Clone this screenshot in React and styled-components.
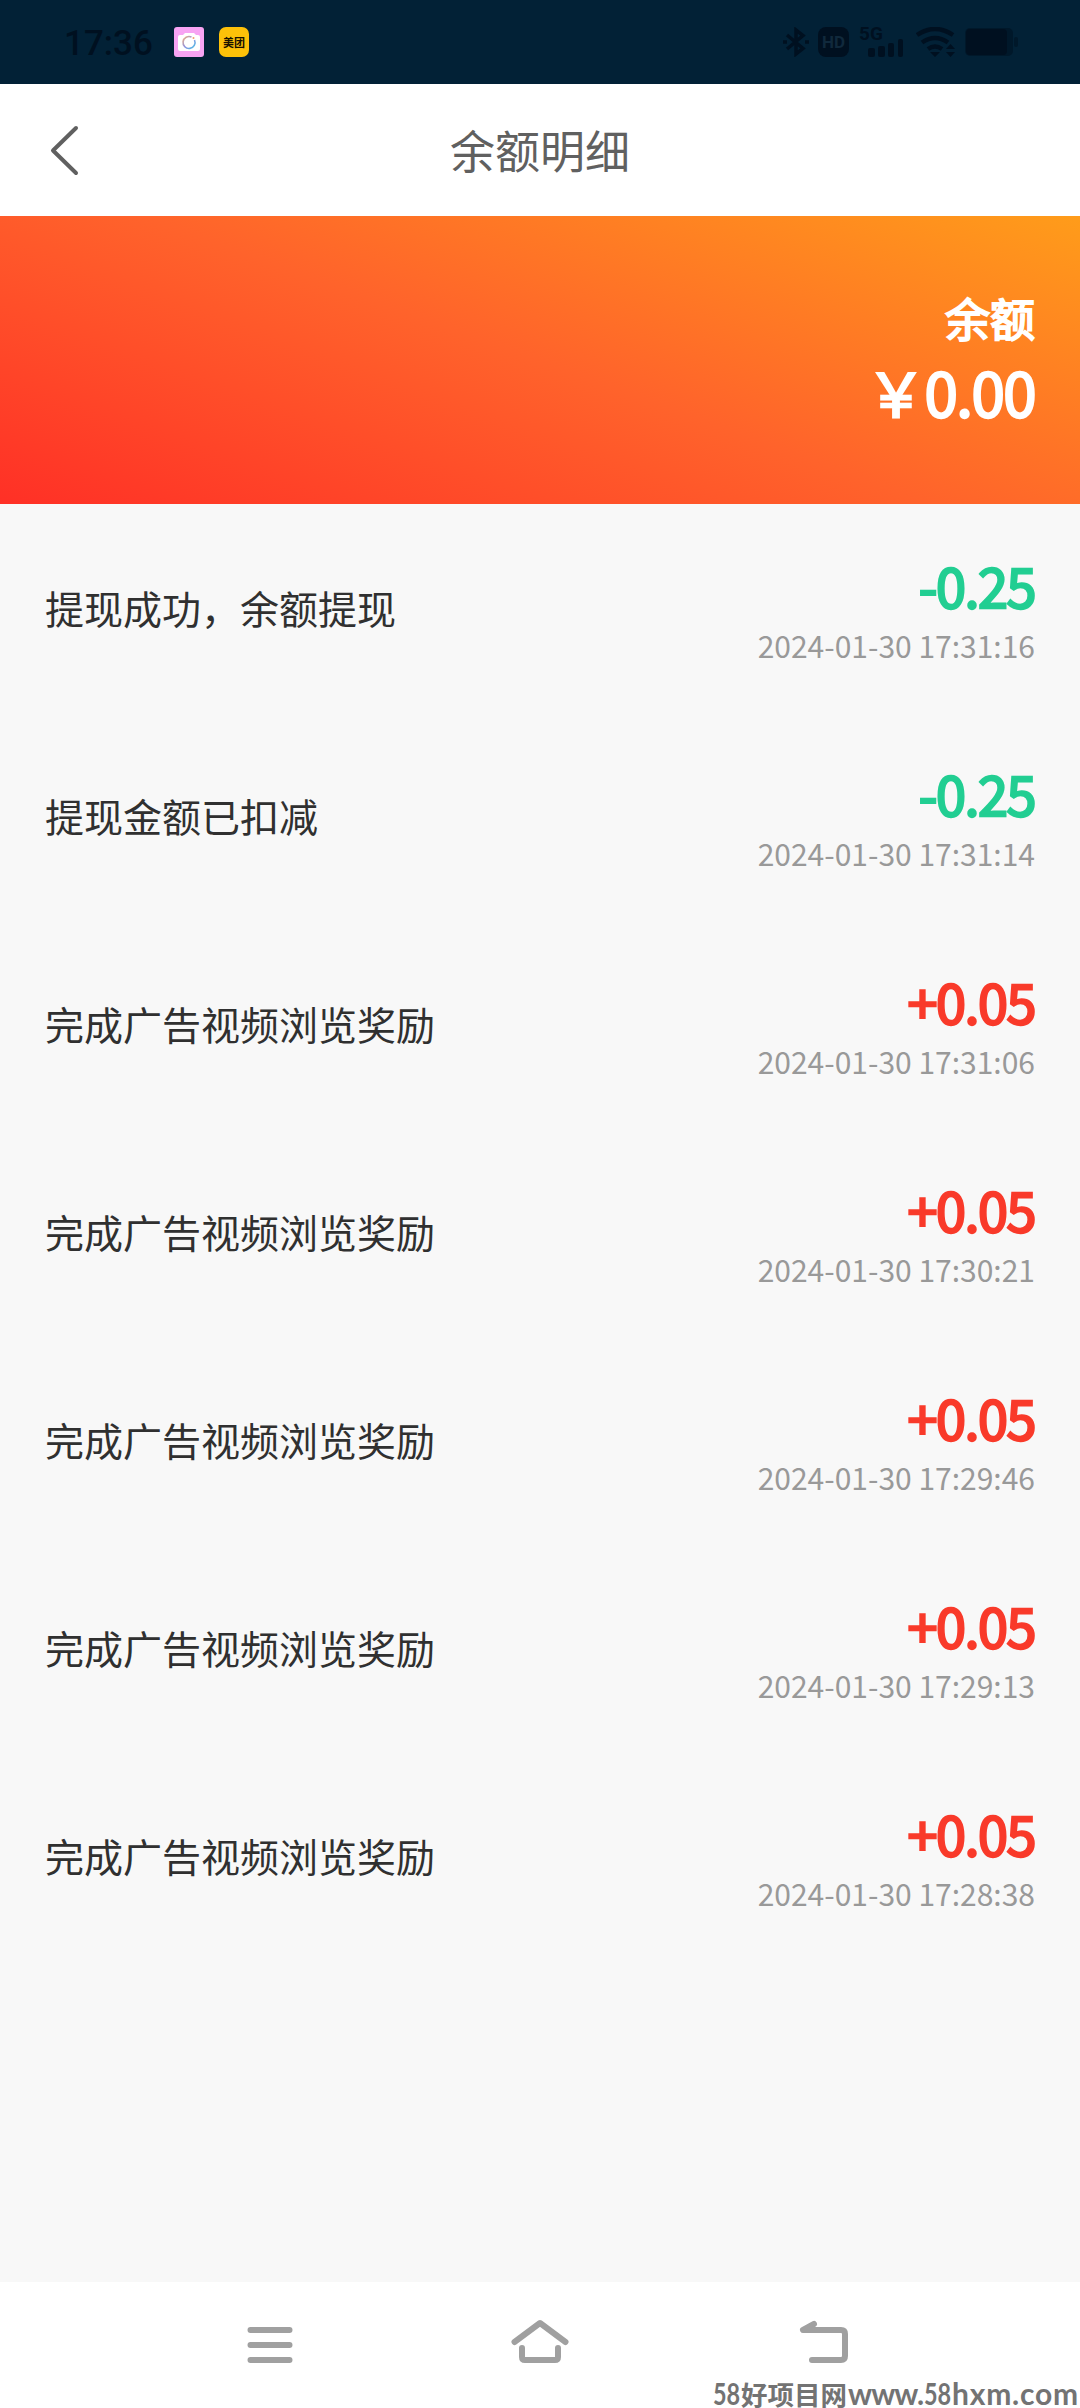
import React from "react";
import styled, { createGlobalStyle } from "styled-components";

const records = [
  { id: 1, title: "提现成功，余额提现", amount: "-0.25", time: "2024-01-30 17:31:16" },
  { id: 2, title: "提现金额已扣减", amount: "-0.25", time: "2024-01-30 17:31:14" },
  { id: 3, title: "完成广告视频浏览奖励", amount: "+0.05", time: "2024-01-30 17:31:06" },
  { id: 4, title: "完成广告视频浏览奖励", amount: "+0.05", time: "2024-01-30 17:30:21" },
  { id: 5, title: "完成广告视频浏览奖励", amount: "+0.05", time: "2024-01-30 17:29:46" },
  { id: 6, title: "完成广告视频浏览奖励", amount: "+0.05", time: "2024-01-30 17:29:13" },
  { id: 7, title: "完成广告视频浏览奖励", amount: "+0.05", time: "2024-01-30 17:28:38" },
];

const CameraIcon = () => (
  <svg width="30" height="30" viewBox="0 0 30 30">
    <defs>
      <linearGradient id="lens" x1="0" y1="0" x2="1" y2="1">
        <stop offset="0" stopColor="#f3b27a" />
        <stop offset="0.5" stopColor="#8f8fe0" />
        <stop offset="1" stopColor="#4cc3e6" />
      </linearGradient>
    </defs>
    <rect width="30" height="30" rx="3" fill="#f7a3f3" />
    <path d="M6 8h3l2-2h9l2 2h2a2 2 0 0 1 2 2v12a2 2 0 0 1-2 2H6a2 2 0 0 1-2-2V10a2 2 0 0 1 2-2z" fill="#fff" />
    <path d="M17.5 10A6 6 0 1 0 20.5 13" fill="none" stroke="url(#lens)" strokeWidth="1.6" />
    <circle cx="19.5" cy="11" r="1" fill="#f09a6c" />
  </svg>
);

const BluetoothIcon = () => (
  <svg width="26" height="30" viewBox="0 0 26 30" fill="none" stroke="currentColor" strokeWidth="3.5">
    <path d="M4 8l16 13.5-7 5.5V3l7 5.5L4 22" />
    <path d="M0 15h4M22 15h4" />
  </svg>
);

const SignalIcon = () => (
  <svg width="36" height="18" viewBox="0 0 36 18" fill="currentColor">
    <rect x="0" y="9" width="7" height="9" rx="2" />
    <rect x="10" y="7" width="7" height="11" rx="2" />
    <rect x="20" y="4" width="6" height="14" rx="2" />
    <rect x="30" y="0" width="5" height="18" rx="2" />
  </svg>
);

const WifiIcon = () => (
  <svg width="40" height="30" viewBox="0 0 40 30" fill="none" stroke="currentColor" strokeWidth="4.5">
    <path d="M1 8q18-12 36 0" />
    <path d="M6 15.5q13-9 26 0" />
    <path d="M12 22q7-5 14 0" />
    <path d="M14 25h10l-5 5z M30 22h9l-4.5-5z M30 25h9l-4.5 5z" fill="currentColor" stroke="none" />
  </svg>
);

const BatteryIcon = () => (
  <svg width="54" height="28" viewBox="0 0 54 28">
    <rect x="0" y="0" width="48" height="28" rx="5" fill="#00182a" />
    <rect x="1" y="1" width="41" height="26" rx="4" fill="currentColor" />
    <rect x="49" y="9" width="4" height="10" rx="2" fill="#00182a" />
  </svg>
);

const BackArrow = () => (
  <svg width="32" height="52" viewBox="0 0 32 52" fill="none" stroke="#606060" strokeWidth="4" strokeLinecap="round" strokeLinejoin="round">
    <path d="M27 4L4 26.5 27 49" />
  </svg>
);

const MenuIcon = () => (
  <svg width="60" height="60" viewBox="0 0 60 60" fill="none" stroke="#a0a0a0" strokeWidth="6" strokeLinecap="round">
    <path d="M10.5 15h39M10.5 30h39M10.5 45h39" />
  </svg>
);

const HomeIcon = () => (
  <svg width="60" height="60" viewBox="0 0 60 60" fill="none" stroke="#a0a0a0" strokeWidth="6" strokeLinecap="round" strokeLinejoin="round">
    <path d="M4.5 27L30 8l25.5 19" />
    <path d="M12 33v9q0 3 3 3h30q3 0 3-3v-9" />
  </svg>
);

const ReturnIcon = () => (
  <svg width="60" height="60" viewBox="0 0 60 60" fill="none" stroke="#a0a0a0" strokeWidth="6" strokeLinecap="round" strokeLinejoin="round">
    <path d="M20 9L9 15h38q4 0 4 4v22q0 4-4 4H18" />
  </svg>
);

const App = () => {
  return (
    <Page>
      <GlobalStyle />

      <StatusBar>
        <Clock>17:36</Clock>
        <Notifications>
          <CameraIcon />
          <MeituanBadge>美团</MeituanBadge>
        </Notifications>
        <SystemIcons>
          <BluetoothIcon />
          <HdBadge>HD</HdBadge>
          <Network>
            <span>5G</span>
            <SignalIcon />
          </Network>
          <WifiIcon />
          <BatteryIcon />
        </SystemIcons>
      </StatusBar>

      <Header>
        <BackButton aria-label="返回">
          <BackArrow />
        </BackButton>
        <Title>余额明细</Title>
      </Header>

      <Banner>
        <BannerLabel>余额</BannerLabel>
        <Balance>￥0.00</Balance>
      </Banner>

      <List>
        {records.map((item) => (
          <Row key={item.id}>
            <RowTitle>{item.title}</RowTitle>
            <RowInfo>
              <Amount $income={item.amount.startsWith("+")}>{item.amount}</Amount>
              <Time>{item.time}</Time>
            </RowInfo>
          </Row>
        ))}
      </List>

      <NavBar>
        <MenuIcon />
        <HomeIcon />
        <ReturnIcon />
        <Watermark>
          <Digits>58</Digits>
          <SiteName>好项目网</SiteName>
          <Domain $spacing="-0.9px" $width="76px">www.</Domain>
          <Digits>58</Digits>
          <Domain $spacing="0.8px">hxm.com</Domain>
        </Watermark>
      </NavBar>
    </Page>
  );
};

const GlobalStyle = createGlobalStyle`
  * {
    box-sizing: border-box;
  }

  body {
    margin: 0;
    background: #f8f8f8;
    font-family: "Noto Sans CJK SC", sans-serif;
  }
`;

const Page = styled.div`
  display: flex;
  flex-direction: column;
  width: 1080px;
  height: 2408px;
  overflow: hidden;
  background: #f8f8f8;
`;

const StatusBar = styled.div`
  display: flex;
  align-items: center;
  height: 84px;
  padding: 0 61px 0 64px;
  background: #022136;
  color: #001020;
`;

const Clock = styled.div`
  width: 110px;
  font-family: Roboto, sans-serif;
  font-size: 35px;
  font-weight: 500;
  line-height: 84px;
  padding-top: 3px;
`;

const Notifications = styled.div`
  display: flex;
  gap: 15px;
`;

const MeituanBadge = styled.div`
  width: 30px;
  height: 30px;
  border-radius: 7px;
  background: #fdc109;
  color: #1a1200;
  font-size: 11px;
  font-weight: 700;
  line-height: 30px;
  text-align: center;
`;

const SystemIcons = styled.div`
  display: flex;
  align-items: center;
  margin-left: auto;
`;

const HdBadge = styled.div`
  width: 31px;
  height: 30px;
  margin: 0 10px 0 9px;
  border-radius: 8px;
  background: currentColor;
  font-family: Roboto, sans-serif;
  font-size: 17px;
  font-weight: 700;
  line-height: 30px;
  text-align: center;

  &::first-line {
    color: #10293c;
  }
`;

const Network = styled.div`
  display: flex;
  flex-direction: column;
  width: 46px;
  height: 32px;
  margin-right: 11px;
  font-family: Roboto, sans-serif;
  font-size: 19px;
  font-weight: 700;
  line-height: 15px;

  svg {
    margin: -2px 0 0 9px;
    flex-shrink: 0;
  }

  & + svg {
    margin-right: 9px;
  }
`;

const Header = styled.header`
  display: grid;
  grid-template-columns: 120px 1fr 120px;
  align-items: center;
  height: 132px;
  background: #fff;
`;

const BackButton = styled.button`
  display: flex;
  width: 100px;
  padding: 0 0 0 49px;
  border: 0;
  background: none;
`;

const Title = styled.h1`
  margin: 0;
  color: #606060;
  font-size: 45px;
  font-weight: 400;
  line-height: 60px;
  text-align: center;
`;

const Banner = styled.section`
  display: flex;
  flex-direction: column;
  align-items: flex-end;
  height: 288px;
  padding: 69px 45px 0 0;
  background: linear-gradient(20deg, #ff3026, #ff632b 50%, #ff9c1a);
  color: #fff;
`;

const BannerLabel = styled.div`
  font-size: 45px;
  line-height: 66px;
  -webkit-text-stroke: 2px currentColor;
`;

const Balance = styled.div`
  font-size: 60px;
  line-height: 79px;
  letter-spacing: -1.5px;
  -webkit-text-stroke: 2.3px currentColor;
`;

const List = styled.main`
  flex: 1;
`;

const Row = styled.div`
  display: flex;
  align-items: center;
  justify-content: space-between;
  height: 208px;
  padding: 0 45px;
`;

const RowTitle = styled.div`
  padding-bottom: 3px;
  color: #303030;
  font-size: 39px;
  line-height: 60px;
`;

const RowInfo = styled.div`
  display: flex;
  flex-direction: column;
  align-items: flex-end;
`;

const Amount = styled.div`
  padding-top: 1px;
  color: ${({ $income }) => ($income ? "#f93a2a" : "#22ce92")};
  font-size: 54px;
  line-height: 73px;
  letter-spacing: -1.5px;
  -webkit-text-stroke: 2.4px currentColor;
`;

const Time = styled.div`
  color: #999;
  font-size: 30px;
  line-height: 49px;
`;

const NavBar = styled.nav`
  position: relative;
  display: grid;
  grid-template-columns: 270px 284px 60px;
  height: 126px;
  padding: 33px 0 0 240px;
  background: #fff;
`;

const Watermark = styled.div`
  position: absolute;
  right: 0;
  bottom: 0;
  display: flex;
  align-items: baseline;
  width: 367px;
  color: #737373;
  font-weight: 700;
  line-height: 28px;
  white-space: nowrap;
`;

const Digits = styled.span`
  width: 28px;
  font-family: Lato, sans-serif;
  font-size: 30px;
  transform: scaleX(0.78);
  transform-origin: left;
`;

const SiteName = styled.span`
  width: 107px;
  font-size: 26.5px;
`;

const Domain = styled.span`
  width: ${({ $width }) => $width || "auto"};
  font-family: Lato, sans-serif;
  font-size: 30px;
  letter-spacing: ${({ $spacing }) => $spacing};
`;

export default App;
